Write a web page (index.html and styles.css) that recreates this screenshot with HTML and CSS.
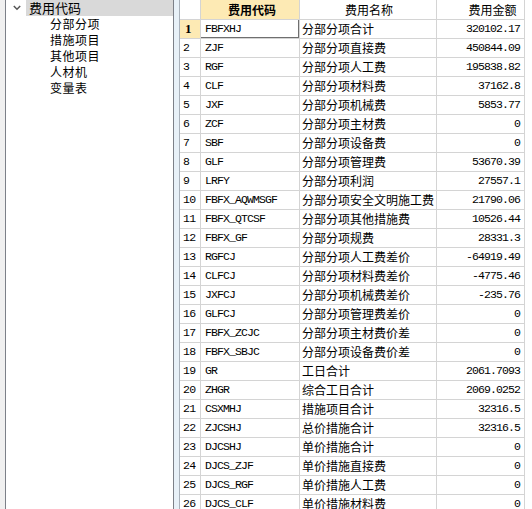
FILE: index.html
```html
<!DOCTYPE html>
<html>
<head>
<meta charset="utf-8">
<link rel="stylesheet" href="styles.css">
</head>
<body>
<div class="app">
  <div class="tree">
    <div class="root">
      <span class="chev"><svg width="8" height="6" viewBox="0 0 8 6"><path d="M0.8 1 L4 4.2 L7.2 1" fill="none" stroke="#555" stroke-width="1.5"/></svg></span>
      <span class="root-label">费用代码</span>
    </div>
    <div class="child">分部分项</div>
    <div class="child">措施项目</div>
    <div class="child">其他项目</div>
    <div class="child">人材机</div>
    <div class="child">变量表</div>
  </div>
  <div class="splitter"></div>
  <div class="gridwrap">
    <div class="grid">
      <div class="row head">
        <div class="c num"></div>
        <div class="c code hsel">费用代码</div>
        <div class="c name hc">费用名称</div>
        <div class="c amt hc">费用金额</div>
      </div>
      <div class="row"><div class="c num nsel">1</div><div class="c code csel">FBFXHJ</div><div class="c name">分部分项合计</div><div class="c amt">320102.17</div></div>
      <div class="row"><div class="c num">2</div><div class="c code">ZJF</div><div class="c name">分部分项直接费</div><div class="c amt">450844.09</div></div>
      <div class="row"><div class="c num">3</div><div class="c code">RGF</div><div class="c name">分部分项人工费</div><div class="c amt">195838.82</div></div>
      <div class="row"><div class="c num">4</div><div class="c code">CLF</div><div class="c name">分部分项材料费</div><div class="c amt">37162.8</div></div>
      <div class="row"><div class="c num">5</div><div class="c code">JXF</div><div class="c name">分部分项机械费</div><div class="c amt">5853.77</div></div>
      <div class="row"><div class="c num">6</div><div class="c code">ZCF</div><div class="c name">分部分项主材费</div><div class="c amt">0</div></div>
      <div class="row"><div class="c num">7</div><div class="c code">SBF</div><div class="c name">分部分项设备费</div><div class="c amt">0</div></div>
      <div class="row"><div class="c num">8</div><div class="c code">GLF</div><div class="c name">分部分项管理费</div><div class="c amt">53670.39</div></div>
      <div class="row"><div class="c num">9</div><div class="c code">LRFY</div><div class="c name">分部分项利润</div><div class="c amt">27557.1</div></div>
      <div class="row"><div class="c num">10</div><div class="c code">FBFX_AQWMSGF</div><div class="c name">分部分项安全文明施工费</div><div class="c amt">21790.06</div></div>
      <div class="row"><div class="c num">11</div><div class="c code">FBFX_QTCSF</div><div class="c name">分部分项其他措施费</div><div class="c amt">10526.44</div></div>
      <div class="row"><div class="c num">12</div><div class="c code">FBFX_GF</div><div class="c name">分部分项规费</div><div class="c amt">28331.3</div></div>
      <div class="row"><div class="c num">13</div><div class="c code">RGFCJ</div><div class="c name">分部分项人工费差价</div><div class="c amt">-64919.49</div></div>
      <div class="row"><div class="c num">14</div><div class="c code">CLFCJ</div><div class="c name">分部分项材料费差价</div><div class="c amt">-4775.46</div></div>
      <div class="row"><div class="c num">15</div><div class="c code">JXFCJ</div><div class="c name">分部分项机械费差价</div><div class="c amt">-235.76</div></div>
      <div class="row"><div class="c num">16</div><div class="c code">GLFCJ</div><div class="c name">分部分项管理费差价</div><div class="c amt">0</div></div>
      <div class="row"><div class="c num">17</div><div class="c code">FBFX_ZCJC</div><div class="c name">分部分项主材费价差</div><div class="c amt">0</div></div>
      <div class="row"><div class="c num">18</div><div class="c code">FBFX_SBJC</div><div class="c name">分部分项设备费价差</div><div class="c amt">0</div></div>
      <div class="row"><div class="c num">19</div><div class="c code">GR</div><div class="c name">工日合计</div><div class="c amt">2061.7093</div></div>
      <div class="row"><div class="c num">20</div><div class="c code">ZHGR</div><div class="c name">综合工日合计</div><div class="c amt">2069.0252</div></div>
      <div class="row"><div class="c num">21</div><div class="c code">CSXMHJ</div><div class="c name">措施项目合计</div><div class="c amt">32316.5</div></div>
      <div class="row"><div class="c num">22</div><div class="c code">ZJCSHJ</div><div class="c name">总价措施合计</div><div class="c amt">32316.5</div></div>
      <div class="row"><div class="c num">23</div><div class="c code">DJCSHJ</div><div class="c name">单价措施合计</div><div class="c amt">0</div></div>
      <div class="row"><div class="c num">24</div><div class="c code">DJCS_ZJF</div><div class="c name">单价措施直接费</div><div class="c amt">0</div></div>
      <div class="row"><div class="c num">25</div><div class="c code">DJCS_RGF</div><div class="c name">单价措施人工费</div><div class="c amt">0</div></div>
      <div class="row"><div class="c num">26</div><div class="c code">DJCS_CLF</div><div class="c name">单价措施材料费</div><div class="c amt">0</div></div>
    </div>
  </div>
</div>
</body>
</html>
```
FILE: styles.css
```css
html, body {
  margin: 0;
  padding: 0;
  width: 532px;
  height: 509px;
  overflow: hidden;
  background: #f0f0f0;
}
.app {
  display: flex;
  height: 509px;
  font-family: "Noto Sans CJK SC", "Liberation Sans", sans-serif;
  font-size: 12px;
  color: #000;
}
.tree {
  margin-left: 5px;
  width: 167px;
  flex: none;
  background: #fff;
  border-left: 1px solid #7c8088;
  border-right: 1px solid #7c8088;
}
.root {
  display: flex;
  align-items: center;
  height: 16px;
}
.chev {
  width: 20px;
  display: flex;
  justify-content: center;
  padding-left: 2px;
  box-sizing: border-box;
}
.root-label {
  flex: 1;
  height: 16px;
  line-height: 16px;
  background: #d9d9d9;
  padding-left: 3px;
  font-size: 13px;
}
.child {
  height: 16px;
  line-height: 16px;
  padding-left: 44px;
  font-size: 12px;
  letter-spacing: 0.5px;
}
.splitter {
  width: 5px;
  flex: none;
  background: #e8f1f8;
}
.gridwrap {
  flex: 1;
  background: #fff;
  border-left: 1px solid #a9b1ba;
}
.grid {
  display: flex;
  flex-direction: column;
}
.row {
  display: grid;
  grid-template-columns: 21px 99px 137px 88px;
  height: 19px;
}
.row.head {
  height: 20px;
}
.c {
  box-sizing: border-box;
  border-right: 1px solid #d4d4d4;
  border-bottom: 1px solid #d4d4d4;
  line-height: 18px;
  white-space: nowrap;
  overflow: hidden;
}
.head .c {
  line-height: 19px;
  text-align: center;
}
.num {
  font-family: "Liberation Mono", monospace;
  font-size: 11.5px;
  letter-spacing: -0.6px;
  padding-left: 3px;
}
.nsel {
  background: #fdeab4;
  font-weight: bold;
  font-family: "Liberation Serif", serif;
  font-size: 13px;
  padding-left: 5px;
}
.code {
  font-family: "Liberation Mono", monospace;
  font-size: 11.5px;
  letter-spacing: -0.9px;
  padding-left: 4px;
}
.head .code {
  font-family: "Noto Sans CJK SC", sans-serif;
  letter-spacing: 0;
}
.hsel {
  background: #fdeab4;
  font-weight: bold;
  font-size: 12px;
}
.csel {
  position: relative;
}
.csel::after {
  content: "";
  position: absolute;
  left: -1px;
  top: -1px;
  right: -1px;
  bottom: -1px;
  border-top: 1px solid #2aa3dc;
  border-left: 1px solid #2aa3dc;
  border-right: 2px solid #6f6f6f;
  border-bottom: 2px solid #6f6f6f;
}
.name {
  padding-left: 2px;
}
.amt {
  font-family: "Liberation Mono", monospace;
  font-size: 11.5px;
  letter-spacing: -0.9px;
  text-align: right;
  padding-right: 4px;
}
.head .name, .head .amt {
  font-family: "Noto Sans CJK SC", sans-serif;
  font-size: 12px;
  letter-spacing: 0;
}
.head .amt {
  padding-left: 24px;
  padding-right: 0;
}
```
